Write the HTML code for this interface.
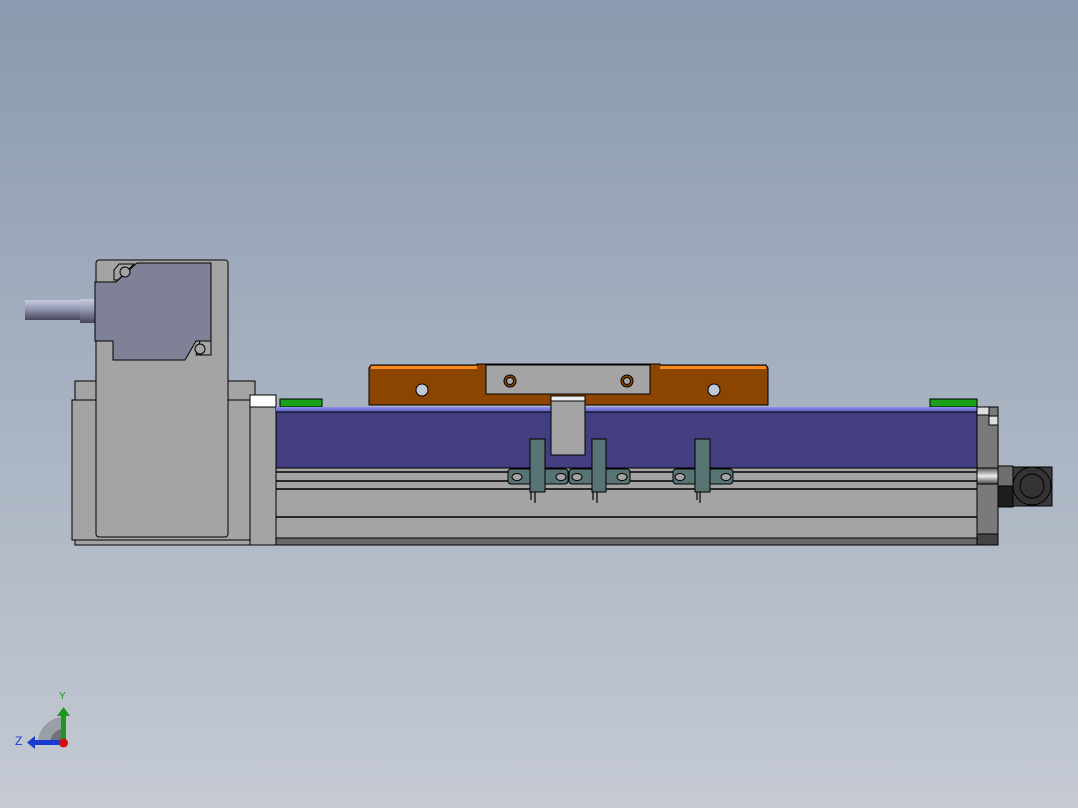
<!DOCTYPE html>
<html><head><meta charset="utf-8"><style>
html,body{margin:0;padding:0;width:1078px;height:808px;overflow:hidden}
body{background:linear-gradient(#8a9aaf,#c5cad3)}
svg{position:absolute;left:0;top:0}
</style></head><body>
<svg width="1078" height="808" viewBox="0 0 1078 808" stroke="#000" stroke-width="1">
<defs>
<linearGradient id="sh" x1="0" y1="0" x2="0" y2="1"><stop offset="0" stop-color="#c8cbe0"/><stop offset="0.4" stop-color="#9a9db8"/><stop offset="1" stop-color="#44465a"/></linearGradient>
<linearGradient id="bt" x1="0" y1="0" x2="0" y2="1"><stop offset="0" stop-color="#9090ee"/><stop offset="1" stop-color="#5858c0"/></linearGradient>
<linearGradient id="cy" x1="0" y1="0" x2="0" y2="1"><stop offset="0" stop-color="#555"/><stop offset="0.5" stop-color="#eee"/><stop offset="1" stop-color="#444"/></linearGradient>
</defs>
<!-- motor -->
<rect x="75" y="381" width="180" height="20" fill="#a4a4a4"/>
<rect x="72" y="400" width="178" height="140" fill="#a4a4a4"/>
<rect x="75" y="540" width="175" height="5" fill="#a4a4a4"/>
<rect x="96" y="260" width="132" height="277" rx="3" fill="#a4a4a4"/>
<rect x="25" y="300" width="58" height="20" fill="url(#sh)" stroke="none"/>
<rect x="80" y="299" width="16" height="24" fill="url(#sh)" stroke="none"/>
<path d="M95 282 H116 L137 263 H211 V341 H196 L185 360 H113 V341 H95 Z" fill="#7f8296"/>
<path d="M119 264 H134 L118 280 H114 V270 Z" fill="#a4a4a4"/>
<circle cx="125" cy="272" r="5" fill="#a4a4a4"/>
<path d="M211 341 V355 H196 L200 341 Z" fill="#a4a4a4"/>
<circle cx="200" cy="349" r="5" fill="#a4a4a4"/>
<!-- coupling -->
<rect x="250" y="395" width="26" height="150" fill="#a4a4a4"/>
<rect x="250" y="395" width="26" height="12" fill="#fff"/>
<!-- green blocks -->
<rect x="280" y="399" width="42" height="8" fill="#1aa01a"/>
<rect x="930" y="399" width="47" height="8" fill="#1aa01a"/>
<!-- rail -->
<rect x="276" y="407" width="701" height="5" fill="url(#bt)" stroke="none"/>
<rect x="276" y="412" width="701" height="56" fill="#423e80"/>
<rect x="276" y="468" width="701" height="77" fill="#a4a4a4"/>
<g stroke-width="1.5">
<line x1="276" y1="472" x2="977" y2="472"/>
<line x1="276" y1="481" x2="977" y2="481"/>
<line x1="276" y1="489" x2="977" y2="489"/>
<line x1="276" y1="517" x2="977" y2="517"/>
</g>
<rect x="276" y="538" width="701" height="7" fill="#6a6a6a"/>
<!-- end cap -->
<rect x="977" y="407" width="21" height="138" fill="#7a7a7a"/>
<rect x="977" y="407" width="12" height="8" fill="#ddd"/>
<rect x="989" y="416" width="9" height="9" fill="#ddd"/>
<rect x="977" y="468" width="21" height="16" fill="url(#cy)"/>
<rect x="977" y="534" width="21" height="11" fill="#444"/>
<rect x="998" y="466" width="15" height="20" fill="#6e6e6e"/>
<rect x="998" y="486" width="15" height="21" fill="#1e1e1e"/>
<rect x="1013" y="467" width="39" height="39" fill="#3a3a3a"/>
<circle cx="1032" cy="486" r="19" fill="#333"/>
<circle cx="1032" cy="486" r="12" fill="#333"/>
<!-- carriage -->
<path d="M371 365 H477 V364 H660 V365 H766 L768 368 V405 H369 V368 Z" fill="#8b4500"/>
<rect x="371" y="366" width="106" height="3" fill="#ff8a1e" stroke="none"/>
<rect x="660" y="366" width="106" height="3" fill="#ff8a1e" stroke="none"/>
<rect x="486" y="365" width="164" height="29" fill="#a4a4a4"/>
<circle cx="422" cy="390" r="6" fill="#c0c8d8"/>
<circle cx="714" cy="390" r="6" fill="#c0c8d8"/>
<circle cx="510" cy="381" r="6" fill="#8b4500"/><circle cx="510" cy="381" r="3.5" fill="#a4a4a4"/>
<circle cx="627" cy="381" r="6" fill="#8b4500"/><circle cx="627" cy="381" r="3.5" fill="#a4a4a4"/>
<rect x="551" y="396" width="34" height="5" fill="#eee"/>
<rect x="551" y="401" width="34" height="54" fill="#a4a4a4"/>
<!-- sensors -->
<g fill="#587373">
<rect x="508" y="469" width="60" height="15" rx="3"/>
<rect x="569" y="469" width="61" height="15" rx="3"/>
<rect x="673" y="469" width="60" height="15" rx="3"/>
</g>
<g fill="#a4a4a4">
<ellipse cx="517" cy="477" rx="5" ry="3.5"/><ellipse cx="561" cy="477" rx="5" ry="3.5"/>
<ellipse cx="577" cy="477" rx="5" ry="3.5"/><ellipse cx="622" cy="477" rx="5" ry="3.5"/>
<ellipse cx="680" cy="477" rx="5" ry="3.5"/><ellipse cx="726" cy="477" rx="5" ry="3.5"/>
</g>
<g fill="#587373">
<rect x="530" y="439" width="15" height="53"/>
<rect x="592" y="439" width="14" height="53"/>
<rect x="695" y="439" width="15" height="53"/>
</g>
<g stroke-width="1.2">
<path d="M531 492 V500 M535 492 V503 M593 492 V500 M597 492 V503 M697 492 V500 M700 492 V503"/>
</g>
<!-- axis triad -->
<path d="M38 743 A26 26 0 0 1 64 717 V743 Z" fill="#9a9ea6" stroke="none"/>
<path d="M50 743 A14 14 0 0 1 64 729 V743 Z" fill="#6e7178" stroke="none"/>
<rect x="61" y="716" width="5" height="26" fill="#1a9a1a" stroke="none"/>
<path d="M57 716 L63.5 707 L70 716 Z" fill="#1a9a1a" stroke="none"/>
<rect x="35" y="740" width="26" height="5" fill="#1a3ad0" stroke="none"/>
<path d="M35 736 L27 742.5 L35 749 Z" fill="#1a3ad0" stroke="none"/>
<circle cx="63.5" cy="743" r="4.5" fill="#d01010" stroke="none"/>
<text x="59" y="699" font-family="Liberation Sans, sans-serif" font-size="10" fill="#1a9a1a" stroke="none">Y</text>
<text x="15" y="745" font-family="Liberation Sans, sans-serif" font-size="12" fill="#1a3ad0" stroke="none">Z</text>
</svg>
</body></html>
